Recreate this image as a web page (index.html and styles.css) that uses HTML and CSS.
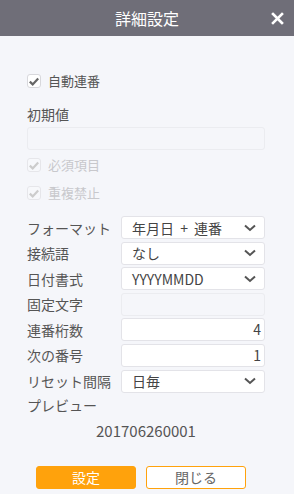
FILE: index.html
```html
<!DOCTYPE html>
<html lang="ja">
<head>
    <meta charset="UTF-8">
    <meta name="viewport" content="width=device-width, initial-scale=1.0">
    <title>詳細設定</title>
    <link rel="stylesheet" href="styles.css">
</head>
<body>
    <div class="dialog">
        <div class="dialog-header">
            <span></span>
            <h1>詳細設定</h1>
            <button class="close-btn" aria-label="閉じる">
                <svg width="13" height="13" viewBox="0 0 13 13"><path d="M2 2 L11 11 M11 2 L2 11" stroke="#fff" stroke-width="2.6" stroke-linecap="square"/></svg>
            </button>
        </div>

        <div class="dialog-body">
            <label class="check first">
                <span class="box"><svg width="10" height="9" viewBox="0 0 10 9"><path d="M0.8 4.6 L3.7 7.4 L9.2 1.4" fill="none" stroke="#666" stroke-width="2.2"/></svg></span>
                自動連番
            </label>

            <div class="field-label">初期値</div>
            <div class="input disabled"></div>

            <label class="check off">
                <span class="box"><svg width="10" height="9" viewBox="0 0 10 9"><path d="M0.8 4.6 L3.7 7.4 L9.2 1.4" fill="none" stroke="#ccc" stroke-width="2.2"/></svg></span>
                必須項目
            </label>
            <label class="check off">
                <span class="box"><svg width="10" height="9" viewBox="0 0 10 9"><path d="M0.8 4.6 L3.7 7.4 L9.2 1.4" fill="none" stroke="#ccc" stroke-width="2.2"/></svg></span>
                重複禁止
            </label>

            <div class="form-grid">
                <div class="row-label">フォーマット</div>
                <div class="select"><span class="spaced">年月日 + 連番</span><svg class="chev" width="12" height="8" viewBox="0 0 12 8"><path d="M1 1.5 L6 6 L11 1.5" fill="none" stroke="#555" stroke-width="2"/></svg></div>

                <div class="row-label">接続語</div>
                <div class="select"><span>なし</span><svg class="chev" width="12" height="8" viewBox="0 0 12 8"><path d="M1 1.5 L6 6 L11 1.5" fill="none" stroke="#555" stroke-width="2"/></svg></div>

                <div class="row-label">日付書式</div>
                <div class="select"><span>YYYYMMDD</span><svg class="chev" width="12" height="8" viewBox="0 0 12 8"><path d="M1 1.5 L6 6 L11 1.5" fill="none" stroke="#555" stroke-width="2"/></svg></div>

                <div class="row-label">固定文字</div>
                <div class="input disabled"></div>

                <div class="row-label">連番桁数</div>
                <div class="input number">4</div>

                <div class="row-label">次の番号</div>
                <div class="input number">1</div>

                <div class="row-label">リセット間隔</div>
                <div class="select"><span>日毎</span><svg class="chev" width="12" height="8" viewBox="0 0 12 8"><path d="M1 1.5 L6 6 L11 1.5" fill="none" stroke="#555" stroke-width="2"/></svg></div>
            </div>

            <div class="field-label preview-label">プレビュー</div>
            <div class="preview">201706260001</div>

            <div class="button-container">
                <button class="btn primary">設定</button>
                <button class="btn secondary">閉じる</button>
            </div>
        </div>
    </div>
</body>
</html>
```

FILE: styles.css
```css
body {
    margin: 0;
    font-family: "Noto Sans CJK JP", "Noto Sans", sans-serif;
    background-color: #f5f6fa;
    color: #555;
}
.dialog {
    width: 294px;
    height: 494px;
    overflow: hidden;
}
.dialog-header {
    height: 36px;
    background-color: #6f6e78;
    display: grid;
    grid-template-columns: 1fr auto 1fr;
    align-items: center;
}
.dialog-header h1 {
    margin: 0;
    font-size: 16px;
    font-weight: normal;
    color: #fff;
    line-height: 36px;
}
.close-btn {
    justify-self: end;
    margin-right: 10px;
    padding: 0;
    border: none;
    background: none;
    width: 13px;
    height: 13px;
    display: flex;
}
.dialog-body {
    padding: 38px 29px 0 27px;
}
.check {
    display: flex;
    align-items: center;
    gap: 7px;
    height: 14px;
    font-size: 13px;
    line-height: 14px;
    color: #555;
}
.check .box {
    width: 12px;
    height: 12px;
    border: 1px solid #d8d8dc;
    border-radius: 3px;
    background-color: #fff;
    display: flex;
    align-items: center;
    justify-content: center;
}
.check.off {
    color: #c8c8cc;
    margin-top: 8px;
}
.check.off .box {
    border-color: #e6e6ea;
    background-color: #f7f8fb;
}
.check.off + .check.off {
    margin-top: 14px;
}
.field-label {
    font-size: 14px;
    line-height: 20px;
    margin-top: 16px;
    color: #555;
}
.input {
    height: 21px;
    border: 1px solid #e3e3e8;
    border-radius: 3px;
    background-color: #fff;
    font-size: 14px;
    line-height: 21px;
}
.dialog-body > .input.disabled {
    margin-top: 3px;
}
.input.disabled {
    background-color: #f5f6fa;
    border-color: #ebecf0;
}
.input.number {
    text-align: right;
    padding-right: 3px;
    color: #444;
}
.form-grid {
    margin-top: 16px;
    display: grid;
    grid-template-columns: 94px 144px;
    grid-auto-rows: 23px;
    row-gap: 2.6px;
    align-items: center;
}
.row-label {
    font-size: 14px;
    white-space: nowrap;
    color: #555;
}
.select {
    height: 21px;
    border: 1px solid #e3e3e8;
    border-radius: 3px;
    background-color: #fff;
    display: flex;
    align-items: center;
    justify-content: space-between;
    padding: 0 8px 0 10px;
    font-size: 14px;
    color: #444;
}
.spaced {
    word-spacing: 3px;
}
.chev {
    display: block;
}
.preview-label {
    margin-top: 2px;
}
.preview {
    text-align: center;
    font-size: 15px;
    margin-top: 6px;
    line-height: 20px;
    color: #555;
}
.button-container {
    display: flex;
    gap: 10px;
    margin: 25px 0 0 9px;
}
.btn {
    width: 100px;
    height: 23px;
    border-radius: 3px;
    font-family: inherit;
    font-size: 14px;
    line-height: 20px;
    padding: 0;
    cursor: pointer;
}
.btn.primary {
    background-color: #ffa20c;
    border: 1px solid #ffa20c;
    color: #fff;
}
.btn.secondary {
    background-color: #fff;
    border: 1px solid #ffa20c;
    color: #666;
}
```
